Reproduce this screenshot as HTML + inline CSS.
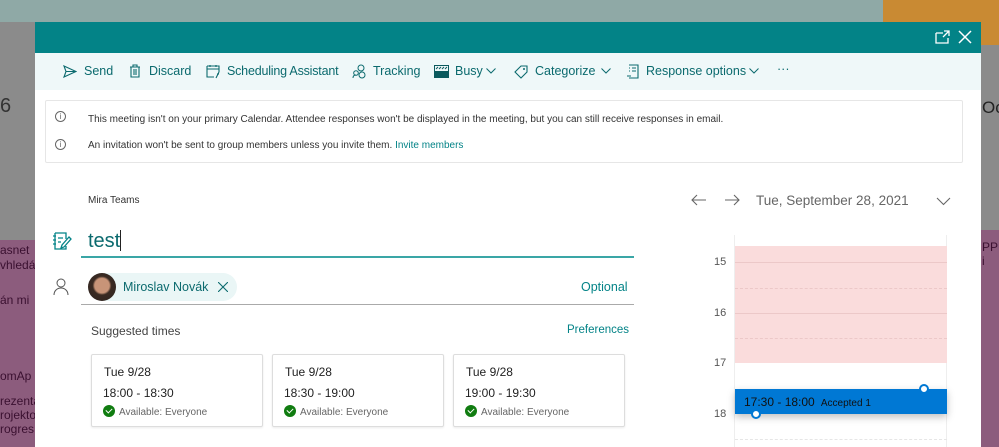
<!DOCTYPE html><html><head><style>
*{margin:0;padding:0;box-sizing:border-box}
body{width:999px;height:447px;overflow:hidden;position:relative;font-family:"Liberation Sans",sans-serif;background:#8b8b8b}
.abs{position:absolute}
.tb{position:absolute;top:53px;left:35px;width:946px;height:37px;background:#eff8f9;color:#0b6a6e;font-size:12.5px}
.tb div{position:absolute;top:11px;white-space:nowrap}
.tb .c{top:10px}
.card{position:absolute;top:354px;width:172px;height:73px;border:1px solid #ddd;border-radius:2px;box-shadow:0 1px 2px rgba(0,0,0,.08);background:#fff}
.card .d{position:absolute;left:12px;top:10px;font-size:12px;color:#222}
.card .t{position:absolute;left:11px;top:31px;font-size:12px;color:#222}
.card .a{position:absolute;left:11px;top:50px;font-size:10px;color:#666}
.card .a i{display:inline-block;width:12px;height:12px;border-radius:50%;background:#107c10;vertical-align:-2px;margin-right:4px;position:relative}
.card .a i:after{content:"";position:absolute;left:3.5px;top:2px;width:3px;height:5px;border:solid #fff;border-width:0 1.5px 1.5px 0;transform:rotate(45deg)}
</style></head><body>
<div class="abs" style="left:0;top:0;width:999px;height:22px;background:#8fa9a6"></div>
<div class="abs" style="left:883px;top:0;width:116px;height:45px;background:#c98a33"></div>
<div class="abs" style="left:0;top:240px;width:35px;height:207px;background:#8c5c7d"></div>
<div class="abs" style="left:981px;top:230px;width:18px;height:217px;background:#8c5c7d"></div>
<div class="abs" style="left:0;top:95px;font-size:20px;color:#333">6</div>
<div class="abs" style="left:0;top:243px;font-size:12px;color:#3a1030;line-height:15px">asnet<br>vhledá</div>
<div class="abs" style="left:0;top:293px;font-size:12px;color:#3a1030">án mi</div>
<div class="abs" style="left:0;top:369px;font-size:12px;color:#3a1030">omAp</div>
<div class="abs" style="left:0;top:394px;font-size:12px;color:#3a1030;line-height:14px">rezenta<br>rojekto<br>rogres</div>
<div class="abs" style="left:982px;top:98px;font-size:17px;color:#222">Oct</div>
<div class="abs" style="left:982px;top:240px;font-size:12px;color:#3a1030">PP i</div>
<div class="abs" style="left:35px;top:22px;width:946px;height:425px;background:#fff"></div>
<div class="abs" style="left:35px;top:22px;width:946px;height:31px;background:#038387"></div>
<svg class="abs" style="left:935px;top:30px" width="16" height="14" viewBox="0 0 16 14"><path d="M1 3h7M1 3v10h12V8M9 1h5v5M14 1l-6 6" stroke="#fff" stroke-width="1.3" fill="none"/></svg>
<svg class="abs" style="left:958px;top:30px" width="14" height="14"><path d="M1 1l12 12M13 1L1 13" stroke="#fff" stroke-width="1.5"/></svg>
<div class="tb">
<svg class="abs" style="left:28px;top:12px" width="14" height="13"><path d="M1 1l12 5.5L1 12l2-5.5zM3 6.5h10" stroke="#0b6a6e" fill="none" stroke-width="1.1"/></svg>
<div style="left:49px">Send</div>
<svg class="abs" style="left:94px;top:11px" width="12" height="14"><path d="M1 3h10M4 3V1h4v2M2 3v10h8V3M5 5v6M7 5v6" stroke="#0b6a6e" fill="none" stroke-width="1.1"/></svg>
<div style="left:114px">Discard</div>
<svg class="abs" style="left:171px;top:11px" width="15" height="15"><path d="M1 2h12v6M1 2v11h7M1 5h12M4 1v2M10 1v2M13 8l-3 6M11 10h2" stroke="#0b6a6e" fill="none" stroke-width="1.1"/></svg>
<div style="left:192px;letter-spacing:-0.2px">Scheduling Assistant</div>
<svg class="abs" style="left:317px;top:11px" width="15" height="15"><circle cx="9" cy="4" r="3" stroke="#0b6a6e" fill="none"/><circle cx="4" cy="9" r="2.3" stroke="#0b6a6e" fill="none"/><circle cx="10" cy="11" r="3" stroke="#0b6a6e" fill="none"/><path d="M1 14c0-2 1-3 3-3" stroke="#0b6a6e" fill="none"/></svg>
<div style="left:338px">Tracking</div>
<svg class="abs" style="left:399px;top:12px" width="15" height="13"><rect x="0.5" y="0.5" width="14" height="12" fill="none" stroke="#0b5a5e"/><rect x="0" y="6" width="15" height="7" fill="#0b5a5e"/><path d="M2 4l2-2M5 4l2-2M8 4l2-2M11 4l2-2" stroke="#0b5a5e"/></svg>
<div style="left:420px">Busy</div>
<svg class="abs" style="left:451px;top:15px" width="10" height="6"><path d="M0.5 0.5l4.5 4.5 4.5-4.5" stroke="#0b6a6e" fill="none"/></svg>
<svg class="abs" style="left:479px;top:12px" width="14" height="14"><path d="M7 1h6v6l-6 6-6-6z" stroke="#0b6a6e" fill="none" stroke-width="1.1"/><circle cx="10" cy="4" r="1" fill="#0b6a6e"/></svg>
<div style="left:500px">Categorize</div>
<svg class="abs" style="left:566px;top:15px" width="10" height="6"><path d="M0.5 0.5l4.5 4.5 4.5-4.5" stroke="#0b6a6e" fill="none"/></svg>
<svg class="abs" style="left:591px;top:11px" width="13" height="15"><path d="M3 1h9v13H3M1 12h4M3 4h1M6 4h4M3 7h1M6 7h4" stroke="#0b6a6e" fill="none" stroke-width="1.1"/></svg>
<div style="left:611px">Response options</div>
<svg class="abs" style="left:714px;top:15px" width="10" height="6"><path d="M0.5 0.5l4.5 4.5 4.5-4.5" stroke="#0b6a6e" fill="none"/></svg>
<div style="left:742px;top:9px">···</div>
</div>
<div class="abs" style="left:45px;top:100px;width:918px;height:63px;border:1px solid #e6e6e6;border-radius:2px"></div>
<div class="abs" style="left:55px;top:111px;width:11px;height:11px;border:1px solid #666;border-radius:50%;font-size:8px;line-height:9px;text-align:center;color:#666">i</div>
<div class="abs" style="left:55px;top:139px;width:11px;height:11px;border:1px solid #666;border-radius:50%;font-size:8px;line-height:9px;text-align:center;color:#666">i</div>
<div class="abs" style="left:88px;top:114px;font-size:10px;color:#333">This meeting isn't on your primary Calendar. Attendee responses won't be displayed in the meeting, but you can still receive responses in email.</div>
<div class="abs" style="left:88px;top:140px;font-size:10px;color:#333">An invitation won't be sent to group members unless you invite them. <span style="color:#038387">Invite members</span></div>
<div class="abs" style="left:88px;top:195px;font-size:10px;color:#333">Mira Teams</div>
<svg class="abs" style="left:52px;top:231px" width="20" height="20"><path d="M3 2h11v6M3 2v16h11v-3M1 5h3M1 9h3M1 13h3M6 7h5M6 11h3M17 6l-7 8-1 3 3-1 7-8z" stroke="#038387" fill="none" stroke-width="1.3"/></svg>
<div class="abs" style="left:88px;top:230px;font-size:20px;color:#0b6a6e">test<span style="display:inline-block;width:1px;height:21px;background:#222;vertical-align:-4px"></span></div>
<div class="abs" style="left:81px;top:256px;width:553px;height:2px;background:#3aa6a6"></div>
<svg class="abs" style="left:53px;top:278px" width="16" height="18"><circle cx="8" cy="5" r="4" stroke="#555" fill="none"/><path d="M1 17c0-4 3-7 7-7s7 3 7 7" stroke="#555" fill="none"/></svg>
<div class="abs" style="left:88px;top:273px;width:149px;height:28px;border-radius:14px;background:#eaf6f6"></div>
<div class="abs" style="left:88px;top:273px;width:28px;height:28px;border-radius:50%;background:radial-gradient(circle at 50% 45%,#c89478 0 35%,#3a2a22 45%,#2c2320 100%)"></div>
<div class="abs" style="left:123px;top:280px;font-size:12.5px;color:#0b6a6e">Miroslav Novák</div>
<svg class="abs" style="left:218px;top:282px" width="10" height="10"><path d="M0 0l10 10M10 0L0 10" stroke="#0b6a6e" stroke-width="1.1"/></svg>
<div class="abs" style="left:581px;top:280px;font-size:12.5px;color:#038387">Optional</div>
<div class="abs" style="left:81px;top:304px;width:553px;height:1px;background:#aaa"></div>
<div class="abs" style="left:91px;top:324px;font-size:12px;color:#444">Suggested times</div>
<div class="abs" style="left:567px;top:324px;font-size:11.5px;color:#038387">Preferences</div>
<div class="card" style="left:91px"><div class="d">Tue 9/28</div><div class="t">18:00 - 18:30</div><div class="a"><i></i>Available: Everyone</div></div>
<div class="card" style="left:272px"><div class="d">Tue 9/28</div><div class="t">18:30 - 19:00</div><div class="a"><i></i>Available: Everyone</div></div>
<div class="card" style="left:453px"><div class="d">Tue 9/28</div><div class="t">19:00 - 19:30</div><div class="a"><i></i>Available: Everyone</div></div>
<svg class="abs" style="left:691px;top:194px" width="16" height="12"><path d="M15 6H1M6 1L1 6l5 5" stroke="#666" fill="none" stroke-width="1.1"/></svg>
<svg class="abs" style="left:724px;top:194px" width="16" height="12"><path d="M1 6h14M10 1l5 5-5 5" stroke="#666" fill="none" stroke-width="1.1"/></svg>
<div class="abs" style="left:756px;top:193px;font-size:13.5px;color:#666">Tue, September 28, 2021</div>
<svg class="abs" style="left:936px;top:197px" width="15" height="9"><path d="M1 1l6.5 6.5L14 1" stroke="#666" fill="none" stroke-width="1.1"/></svg>
<div class="abs" style="left:734px;top:235px;width:1px;height:212px;background:#eee"></div>
<div class="abs" style="left:946px;top:235px;width:1px;height:212px;background:#eee"></div>
<div class="abs" style="left:735px;top:246px;width:212px;height:117px;background:#fadcdc"></div>
<div class="abs" style="left:735px;top:262px;width:212px;border-top:1px solid #ecc8c8"></div>
<div class="abs" style="left:735px;top:288px;width:212px;border-top:1px dashed #ecc8c8"></div>
<div class="abs" style="left:735px;top:313px;width:212px;border-top:1px solid #ecc8c8"></div>
<div class="abs" style="left:735px;top:338px;width:212px;border-top:1px dashed #ecc8c8"></div>
<div class="abs" style="left:735px;top:439px;width:212px;border-top:1px dashed #e6e6e6"></div>
<div class="abs" style="left:714px;top:256px;font-size:11px;color:#555">15</div>
<div class="abs" style="left:714px;top:307px;font-size:11px;color:#555">16</div>
<div class="abs" style="left:714px;top:357px;font-size:11px;color:#555">17</div>
<div class="abs" style="left:714px;top:408px;font-size:11px;color:#555">18</div>
<div class="abs" style="left:735px;top:389px;width:212px;height:25px;background:#0078d4;box-shadow:0 3px 8px rgba(0,0,0,.25)"></div>
<div class="abs" style="left:744px;top:395px;font-size:12px;color:#111;white-space:nowrap">17:30 - 18:00 <span style="font-size:10px">&nbsp;Accepted 1</span></div>
<div class="abs" style="left:919px;top:384px;width:10px;height:10px;border-radius:50%;background:#fff;border:2px solid #0078d4"></div>
<div class="abs" style="left:751px;top:409px;width:10px;height:10px;border-radius:50%;background:#fff;border:2px solid #0078d4"></div>
</body></html>
